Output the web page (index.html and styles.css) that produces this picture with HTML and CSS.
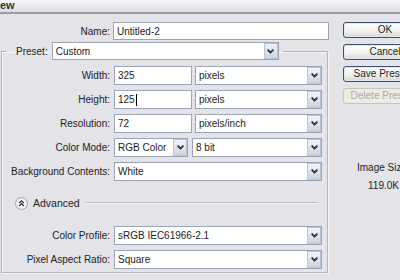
FILE: index.html
```html
<!DOCTYPE html>
<html>
<head>
<meta charset="utf-8">
<link rel="stylesheet" href="styles.css">
</head>
<body>
<div class="titlebar"><span class="title">New</span></div>
<div class="main">
  <div class="form">
    <div class="row namerow">
      <label class="lbl">Name:</label>
      <div class="field name">Untitled-2</div>
    </div>
    <fieldset class="group">
      <legend class="preset">
        <label class="plbl">Preset:</label>
        <div class="select presetsel"><span class="val">Custom</span><i class="drop"><svg width="7" height="5" viewBox="0 0 7 5"><path d="M0.6 0.6 L3.5 3.5 L6.4 0.6" stroke="#2a2a2a" stroke-width="1.7" fill="none"/></svg></i></div>
      </legend>
      <div class="rows">
        <div class="row">
          <label class="lbl">Width:</label>
          <div class="field num">325</div>
          <div class="select unit"><span class="val">pixels</span><i class="drop"><svg width="7" height="5" viewBox="0 0 7 5"><path d="M0.6 0.6 L3.5 3.5 L6.4 0.6" stroke="#2a2a2a" stroke-width="1.7" fill="none"/></svg></i></div>
        </div>
        <div class="row">
          <label class="lbl">Height:</label>
          <div class="field num">125<span class="caret"></span></div>
          <div class="select unit"><span class="val">pixels</span><i class="drop"><svg width="7" height="5" viewBox="0 0 7 5"><path d="M0.6 0.6 L3.5 3.5 L6.4 0.6" stroke="#2a2a2a" stroke-width="1.7" fill="none"/></svg></i></div>
        </div>
        <div class="row">
          <label class="lbl">Resolution:</label>
          <div class="field num">72</div>
          <div class="select unit"><span class="val">pixels/inch</span><i class="drop"><svg width="7" height="5" viewBox="0 0 7 5"><path d="M0.6 0.6 L3.5 3.5 L6.4 0.6" stroke="#2a2a2a" stroke-width="1.7" fill="none"/></svg></i></div>
        </div>
        <div class="row">
          <label class="lbl">Color Mode:</label>
          <div class="select mode"><span class="val">RGB Color</span><i class="drop"><svg width="7" height="5" viewBox="0 0 7 5"><path d="M0.6 0.6 L3.5 3.5 L6.4 0.6" stroke="#2a2a2a" stroke-width="1.7" fill="none"/></svg></i></div>
          <div class="select depth"><span class="val">8 bit</span><i class="drop"><svg width="7" height="5" viewBox="0 0 7 5"><path d="M0.6 0.6 L3.5 3.5 L6.4 0.6" stroke="#2a2a2a" stroke-width="1.7" fill="none"/></svg></i></div>
        </div>
        <div class="row">
          <label class="lbl">Background Contents:</label>
          <div class="select full"><span class="val">White</span><i class="drop"><svg width="7" height="5" viewBox="0 0 7 5"><path d="M0.6 0.6 L3.5 3.5 L6.4 0.6" stroke="#2a2a2a" stroke-width="1.7" fill="none"/></svg></i></div>
        </div>
        <div class="advanced">
          <svg class="advicon" width="13" height="13" viewBox="0 0 13 13"><circle cx="6.5" cy="6.5" r="5.9" fill="#f6f6f8" stroke="#9c9ca8" stroke-width="1"/><path d="M4.2 6.2 L6.5 3.9 L8.8 6.2 M4.2 9 L6.5 6.7 L8.8 9" stroke="#2a2a2a" stroke-width="1.2" fill="none"/></svg>
          <span class="advtext">Advanced</span>
          <span class="sep"></span>
        </div>
        <div class="row">
          <label class="lbl">Color Profile:</label>
          <div class="select full"><span class="val">sRGB IEC61966-2.1</span><i class="drop"><svg width="7" height="5" viewBox="0 0 7 5"><path d="M0.6 0.6 L3.5 3.5 L6.4 0.6" stroke="#2a2a2a" stroke-width="1.7" fill="none"/></svg></i></div>
        </div>
        <div class="row">
          <label class="lbl">Pixel Aspect Ratio:</label>
          <div class="select full"><span class="val">Square</span><i class="drop"><svg width="7" height="5" viewBox="0 0 7 5"><path d="M0.6 0.6 L3.5 3.5 L6.4 0.6" stroke="#2a2a2a" stroke-width="1.7" fill="none"/></svg></i></div>
        </div>
      </div>
    </fieldset>
  </div>
  <div class="side">
    <button class="btn">OK</button>
    <button class="btn">Cancel</button>
    <button class="btn">Save Preset...</button>
    <button class="btn disabled">Delete Preset...</button>
    <div class="imgsize">Image Size:</div>
    <div class="imgval">119.0K</div>
  </div>
</div>
</body>
</html>
```

FILE: styles.css
```css
html, body {
  margin: 0;
  padding: 0;
  overflow: hidden;
}
body {
  width: 400px;
  height: 280px;
  background: #e3e3e8;
  font-family: "Liberation Sans", Arial, sans-serif;
  font-size: 10px;
  color: #222;
}
.titlebar {
  height: 12px;
  background: linear-gradient(#f6f6f9, #dcdce3);
  border-bottom: 2px solid #9a9aa8;
  overflow: hidden;
  line-height: 11px;
}
.title {
  display: inline-block;
  margin-left: -8px;
  font-size: 11px;
  font-weight: bold;
  color: #333;
}
.main {
  display: flex;
}
.form {
  width: 329px;
  flex-shrink: 0;
  padding-top: 8px;
}
.row {
  display: flex;
  align-items: center;
  height: 19px;
}
.lbl {
  width: 113px;
  text-align: right;
  padding-right: 3px;
  box-sizing: border-box;
  flex-shrink: 0;
  white-space: nowrap;
}
.rows .lbl {
  width: 112px;
  padding-right: 4px;
}
.namerow {
  height: 18px;
}
.field, .select {
  box-sizing: border-box;
  height: 19px;
  background: #fff;
  border: 1px solid #9aa6b6;
  display: flex;
  align-items: center;
  padding-left: 3px;
  white-space: nowrap;
  overflow: hidden;
}
.name {
  width: 216px;
  height: 18px;
}
.group {
  margin: 2px 0 0 1px;
  padding: 0 0 3px 0;
  width: 327px;
  box-sizing: border-box;
  border: 1px solid #b4b4bc;
  box-shadow: 1px 1px 0 #f6f6f8, inset 1px 1px 0 #f6f6f8;
}
.preset {
  display: flex;
  align-items: center;
  margin-left: 4px;
  padding: 0 4px 0 10px;
  height: 18px;
}
.plbl {
  margin-right: 4px;
}
.presetsel {
  width: 227px;
  height: 18px;
}
.select {
  justify-content: space-between;
  padding-right: 0;
}
.val {
  overflow: hidden;
}
.drop {
  width: 14px;
  height: 17px;
  box-sizing: border-box;
  border: 1px solid #b8c4d8;
  background: linear-gradient(#eef1f7, #cfd6e2);
  display: flex;
  align-items: center;
  justify-content: center;
  flex-shrink: 0;
}
.presetsel .drop {
  height: 16px;
}
.rows {
  display: flex;
  flex-direction: column;
  gap: 5px;
  padding-top: 6px;
}
.num {
  width: 78px;
}
.unit {
  width: 127px;
  margin-left: 3px;
}
.mode {
  width: 74px;
}
.depth {
  width: 130px;
  margin-left: 4px;
}
.full {
  width: 208px;
}
.caret {
  display: inline-block;
  width: 1px;
  height: 12px;
  background: #000;
  margin-left: 1px;
}
.advanced {
  display: flex;
  align-items: center;
  height: 14px;
  margin: 10px 0 11px 0;
  padding-left: 13px;
}
.advicon {
  flex-shrink: 0;
}
.advtext {
  margin-left: 5px;
  font-size: 10.5px;
}
.sep {
  margin-left: 5px;
  width: 232px;
  height: 1px;
  background: #b8b8c2;
  border-bottom: 1px solid #f6f6f8;
}
.side {
  margin-left: 14px;
  padding-top: 8px;
  display: flex;
  flex-direction: column;
  flex-shrink: 0;
  width: 84px;
}
.btn {
  width: 84px;
  height: 16px;
  margin: 0 0 6px 0;
  padding: 0;
  font-family: inherit;
  font-size: 10px;
  color: #222;
  border: 1px solid #3b4d72;
  border-radius: 3px;
  background: linear-gradient(#ffffff, #f0f0ec 60%, #d8d6ce);
  box-shadow: inset 0 0 0 1px #dfe8f6;
  white-space: nowrap;
  line-height: 14px;
}
.btn.disabled {
  color: #aeac9e;
  border-color: #c8c6ba;
  background: #ecebe4;
  box-shadow: none;
}
.imgsize {
  margin-top: 52px;
  padding-left: 14px;
  white-space: nowrap;
  line-height: 12px;
}
.imgval {
  margin-top: 6px;
  padding-left: 25px;
  line-height: 12px;
}
```
